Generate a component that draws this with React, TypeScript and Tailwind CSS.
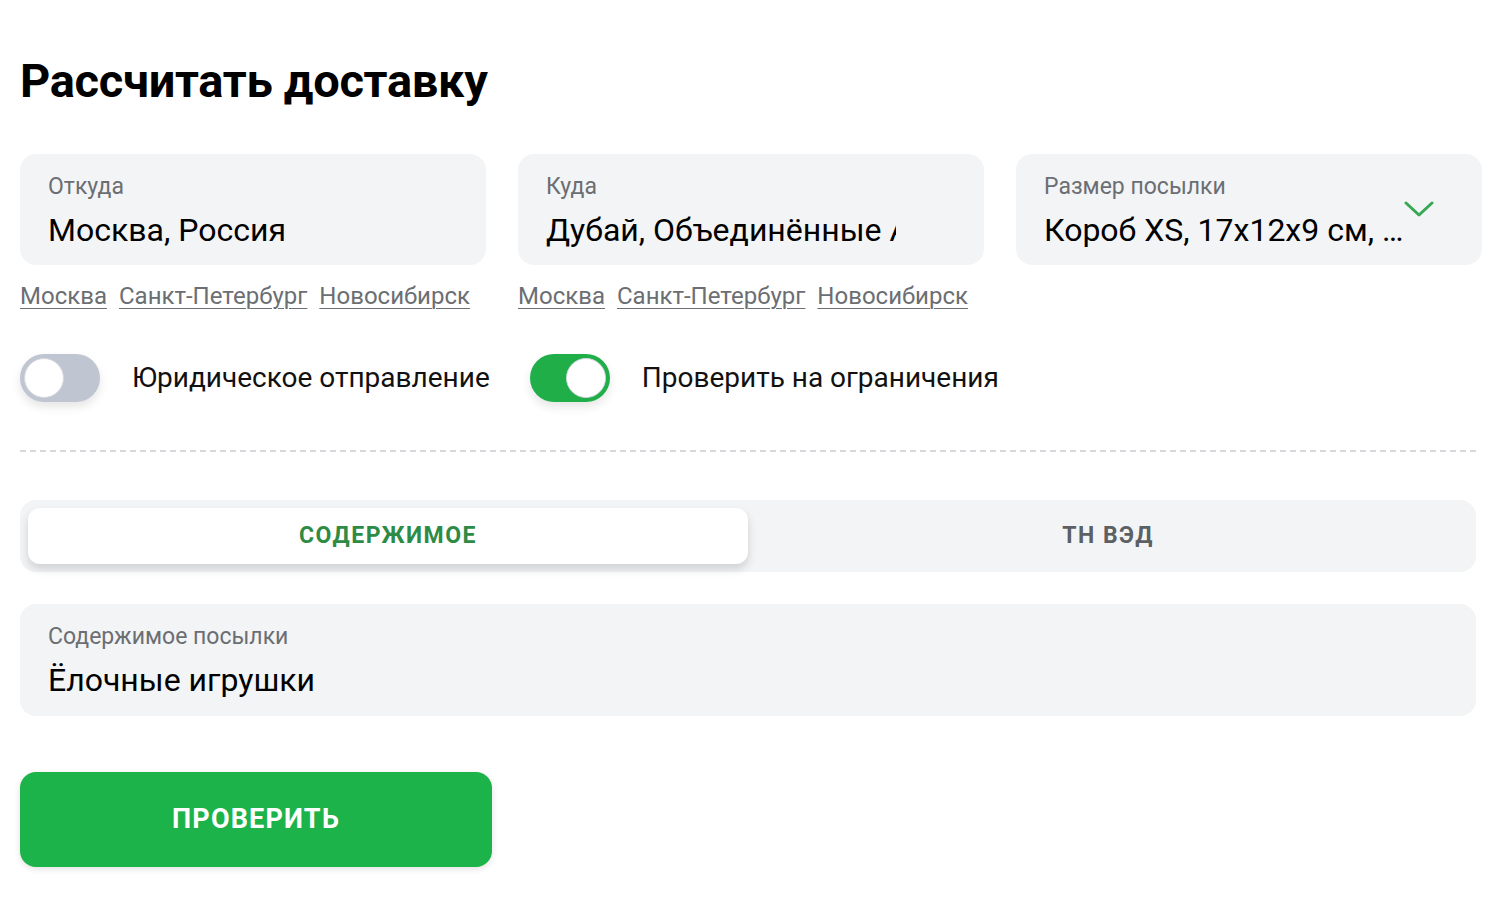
import { useState } from "react";

const cities = ["Москва", "Санкт-Петербург", "Новосибирск"];

function Chevron() {
  return (
    <svg width="30" height="16" viewBox="0 0 30 16" fill="none" className="absolute right-[48px] top-[47px]">
      <polyline points="2,2 15,14 28,2" stroke="#37a853" strokeWidth="3" strokeLinecap="round" strokeLinejoin="round" />
    </svg>
  );
}

function Field({ label, value, chevron }: { label: string; value: string; chevron?: boolean }) {
  return (
    <div className="relative h-[111px] rounded-2xl bg-[#f3f4f6] pl-7 pt-[19px]">
      <div className="text-[23px] leading-7 text-[#6b6e72]">{label}</div>
      <div
        className={`mt-[11px] overflow-hidden whitespace-nowrap text-[32px] leading-9 text-black ${
          chevron ? "w-[360px]" : "w-[350px]"
        }`}
      >
        {value}
      </div>
      {chevron && <Chevron />}
    </div>
  );
}

function CityLinks() {
  return (
    <div className="mt-[17px] flex gap-3 text-[24px] leading-7 text-[#6b6e72]">
      {cities.map((c) => (
        <a key={c} href="#" className="underline underline-offset-4 decoration-1">
          {c}
        </a>
      ))}
    </div>
  );
}

function Toggle({ on, onClick }: { on: boolean; onClick: () => void }) {
  return (
    <button
      onClick={onClick}
      className={`flex h-12 w-20 shrink-0 items-center rounded-full p-1 shadow-[0_5px_10px_rgba(0,0,0,0.1)] ${
        on ? "justify-end bg-[#1fae48]" : "justify-start bg-[#bfc5d1]"
      }`}
    >
      <span className="h-10 w-10 rounded-full border border-[#d4d7dc] bg-white" />
    </button>
  );
}

export default function App() {
  const [legal, setLegal] = useState(false);
  const [restrict, setRestrict] = useState(true);
  const [tab, setTab] = useState(0);

  const tabClass = (active: boolean) =>
    `rounded-xl text-[23px] font-bold tracking-[1.5px] ${
      active ? "bg-white text-[#2e8b45] shadow-[0_5px_10px_rgba(0,0,0,0.15)]" : "text-[#5c5f63]"
    }`;

  return (
    <div className="min-h-screen bg-white px-5 pt-[52px] font-['Roboto',sans-serif] text-black">
      <h1 className="text-[47px] font-bold leading-[58px] tracking-[-0.3px]">Рассчитать доставку</h1>

      <div className="mt-[44px] grid w-[1462px] grid-cols-3 gap-8">
        <div>
          <Field label="Откуда" value="Москва, Россия" />
          <CityLinks />
        </div>
        <div>
          <Field label="Куда" value="Дубай, Объединённые Арабские Эмираты" />
          <CityLinks />
        </div>
        <div>
          <Field label="Размер посылки" value="Короб XS, 17x12x9 см, …" chevron />
        </div>
      </div>

      <div className="mt-[44px] flex items-center">
        <Toggle on={legal} onClick={() => setLegal(!legal)} />
        <span className="ml-8 text-[28px] text-[#111]">Юридическое отправление</span>
        <div className="ml-10">
          <Toggle on={restrict} onClick={() => setRestrict(!restrict)} />
        </div>
        <span className="ml-8 text-[28px] text-[#111]">Проверить на ограничения</span>
      </div>

      <div className="mt-[48px] w-[1456px] border-t-2 border-dashed border-[#d6d8dc]" />

      <div className="mt-[48px] grid h-[72px] w-[1456px] grid-cols-2 rounded-2xl bg-[#f3f4f6] p-2">
        <button onClick={() => setTab(0)} className={tabClass(tab === 0)}>
          СОДЕРЖИМОЕ
        </button>
        <button onClick={() => setTab(1)} className={tabClass(tab === 1)}>
          ТН ВЭД
        </button>
      </div>

      <div className="mt-8 h-[112px] w-[1456px] rounded-2xl bg-[#f3f4f6] px-7 pt-[19px]">
        <div className="text-[23px] leading-7 text-[#6b6e72]">Содержимое посылки</div>
        <div className="mt-[11px] text-[32px] leading-9 text-black">Ёлочные игрушки</div>
      </div>

      <button className="mt-14 h-[95px] w-[472px] rounded-2xl bg-[#1cb34a] text-[27px] font-bold tracking-[1.2px] text-white shadow-[0_2px_6px_rgba(0,0,0,0.12)]">
        ПРОВЕРИТЬ
      </button>
    </div>
  );
}
